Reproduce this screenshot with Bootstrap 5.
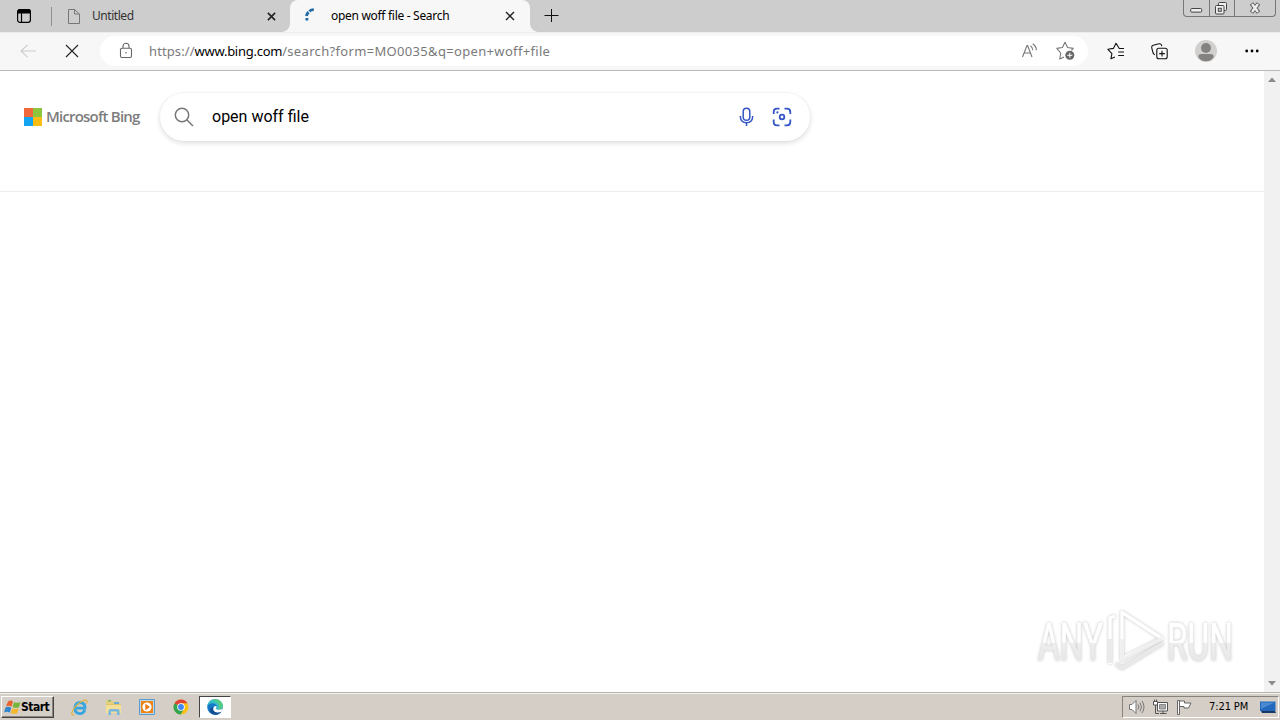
<!DOCTYPE html>
<html lang="en">
<head>
  <meta charset="UTF-8">
  <title>open woff file - Search</title>
  <link href="https://cdn.jsdelivr.net/npm/bootstrap@5.3.3/dist/css/bootstrap.min.css" rel="stylesheet">
  <style>
    body { width: 1280px; height: 720px; overflow: hidden; font-family: "Noto Sans", "Open Sans", sans-serif; color: #000; background: #fff; }
    svg { display: block; flex: none; overflow: visible; }
    span { white-space: nowrap; }

    /* tabs */
    .tab-strip { height: 32px; background: #cdcdcd; font-size: 12px; }
    .strip-menu { width: 51px; padding-left: 16px; }
    .strip-line { width: 1px; height: 19px; background: #8f8f8f; margin-top: 7px; }
    .tab-idle { width: 238px; padding: 0 14px 0 14px; color: #333; }
    .tab-live { width: 240px; padding: 0 15px 0 14px; background: #f7f7f7; border-radius: 8px 8px 0 0; position: relative; }
    .tab-live::before, .tab-live::after { content: ""; position: absolute; bottom: 0; width: 8px; height: 8px; }
    .tab-live::before { left: -8px; background: radial-gradient(circle at 0 0, #cdcdcd 7.5px, #f7f7f7 8px); }
    .tab-live::after { right: -8px; background: radial-gradient(circle at 100% 0, #cdcdcd 7.5px, #f7f7f7 8px); }
    .idle-title { letter-spacing: -.45px; }
    .live-title { letter-spacing: -.3px; margin-left: 13px; }
    .new-tab { padding-left: 14px; }
    .win-buttons { width: 93px; height: 17px; margin-right: 4px; border: 1px solid #777; border-top: 0; border-radius: 0 0 4px 4px; }
    .win-buttons > div + div { border-left: 1px solid #777; }

    /* toolbar */
    .tool-bar { height: 39px; padding-bottom: 1px; background: #f7f7f7; border-top: 1px solid #ececec; border-bottom: 1px solid #b9b9b9; }
    .address { width: 988px; height: 30px; margin-left: 22px; padding: 0 13px 0 18px; background: #fff; border-radius: 15px; font-size: 13px; color: #7a7a7a; }
    .address-text { letter-spacing: .33px; margin-left: 15px; padding-top: 2px; }
    .address-scheme { letter-spacing: .1px; }
    .address-host { letter-spacing: -.27px; color: #000; }

    /* search page */
    .page-view { height: 621px; }
    .search-head { height: 121px; padding: 22px 0 0 24px; border-bottom: 1px solid #ececec; }
    .logo-squares { display: grid; grid-template-columns: 9px 9px; grid-auto-rows: 9px; width: 18px; }
    .logo-text { font-family: "Open Sans", sans-serif; font-size: 15px; font-weight: 600; letter-spacing: -.8px; color: #7c7c7c; width: 114px; margin-left: 4px; padding-bottom: 2px; }
    .search-box { width: 650px; height: 48px; padding: 0 18px 0 14px; border-radius: 24px; background: #fff; box-shadow: 0 0 0 1px rgba(0,0,0,.02), 0 2px 4px 1px rgba(0,0,0,.1); }
    .query { font-family: Roboto, sans-serif; font-size: 16px; margin-left: 18px; }
    .scroll-track { width: 16px; background: #f1f1f1; padding: 6px 0 6px; }
    .watermark { position: absolute; left: 1036px; top: 609px; filter: drop-shadow(0 0 1.5px rgba(0,0,0,.25)); }

    /* taskbar */
    .task-bar { height: 28px; padding-top: 1px; background: #d5cec6; border-top: 1px solid #b6b3ae; box-shadow: inset 0 1px #f4f2ef; font-family: "DejaVu Sans", sans-serif; }
    .start-btn { width: 53px; height: 22px; margin-left: 1px; padding-left: 2px; border: 1px solid; border-color: #fff #444 #444 #fff; box-shadow: inset -1px -1px #8b8780; font: bold 12px "DejaVu Sans Condensed", "DejaVu Sans", sans-serif; letter-spacing: -.5px; }
    .task-live { width: 32px; height: 22px; background: #fff; border: 1px solid; border-color: #444 #fff #fff #444; }
    .tray { width: 157px; height: 22px; margin-right: 1px; border: 1px solid; border-color: #87827b #fff #fff #87827b; font-size: 11px; }
    .clock { letter-spacing: -.1px; width: 40px; margin-left: 16px; padding-top: 1px; font-family: "DejaVu Sans Condensed", sans-serif; }
  </style>
</head>
<body class="d-flex flex-column">

  <div class="tab-strip d-flex">
    <div class="strip-menu d-flex align-items-center">
      <svg width="16" height="16" viewBox="0 0 16 16" fill="none" stroke="#000" stroke-width="1.2"><rect x="1.6" y="1.6" width="12.8" height="12.8" rx="2.4"/><path d="M1.6 4V3.5Q2 1.6 4 1.6h8q2 0 2.4 2V5H1.6z" fill="#000"/><path d="M5.5 5v9.4"/></svg>
    </div>
    <div class="strip-line"></div>
    <div class="tab-idle d-flex align-items-center">
      <svg width="14" height="16" viewBox="0 0 14 16" fill="none" stroke="#777"><path d="M2.5 1.5h6L13.5 6v9.5h-11zM8.5 1.5V6h5"/></svg>
      <span class="idle-title ms-2 ps-1">Untitled</span>
      <svg class="ms-auto" width="9" height="9" viewBox="0 0 10 10" stroke="#222" stroke-width="1.8"><path d="M1 1l8 8M9 1L1 9"/></svg>
    </div>
    <div class="tab-live d-flex align-items-center">
      <svg width="14" height="16" viewBox="0 0 14 16" fill="none" stroke="#1f69a5" stroke-width="2.8"><path d="M2.9 12.5V10M2.4 8Q2.7 5.7 4.6 4.1M5.3 3.3Q7.2 1.7 9.8 1.7"/></svg>
      <span class="live-title">open woff file - Search</span>
      <svg class="ms-auto" width="10" height="10" viewBox="0 0 10 10" stroke="#222" stroke-width="1.4"><path d="M1 1l8 8M9 1L1 9"/></svg>
    </div>
    <div class="new-tab d-flex align-items-center">
      <svg width="14" height="14" viewBox="0 0 14 14" stroke="#111"><path d="M.5 6.5h14M7.5 0v13"/></svg>
    </div>
    <div class="win-buttons d-flex ms-auto">
      <div class="d-flex align-items-center justify-content-center" style="width:25px"><svg width="13" height="16" viewBox="0 0 13 16"><rect x=".7" y="8.5" width="11" height="3.6" rx="1" fill="#eee" stroke="#444"/></svg></div>
      <div class="d-flex align-items-center justify-content-center" style="width:25px"><svg width="14" height="16" viewBox="0 0 14 16" fill="#eee" stroke="#444"><rect x="3.5" y="2.5" width="8" height="8" rx="1"/><rect x=".5" y="5.5" width="8.5" height="8.5" rx="1"/><rect x="3.3" y="8.3" width="3" height="3" fill="#cdcdcd"/></svg></div>
      <div class="d-flex align-items-center justify-content-center flex-grow-1"><svg width="12" height="12" viewBox="0 0 12 12"><path d="M2.5 1.5l7 9M9.5 1.5l-7 9" stroke="#555" stroke-width="4.2"/><path d="M3 2.1l6 7.8M9 2.1L3 9.9" stroke="#eee" stroke-width="2.4"/></svg></div>
    </div>
  </div>

  <div class="tool-bar d-flex align-items-center">
    <svg style="margin-left:20px" width="16" height="14" viewBox="0 0 16 14" fill="none" stroke="#cbcbcb" stroke-width="1.1"><path d="M16 7H1M7.5 .8L1 7l6.5 6.2"/></svg>
    <svg style="margin-left:30px" width="12" height="12" viewBox="0 0 12 12" stroke="#222" stroke-width="1.1"><path d="M0 0l12 12M12 0L0 12"/></svg>
    <div class="address d-flex align-items-center">
      <svg width="16" height="18" viewBox="0 0 16 18" fill="none" stroke="#666" stroke-width="1.1"><rect x="2.5" y="6.2" width="11" height="9.3" rx="1.5"/><path d="M5 6V4.3a3 3 0 0 1 6 0V6"/><circle cx="8" cy="10.8" r=".8" fill="#666" stroke="none"/></svg>
      <span class="address-text"><span class="address-scheme">https://</span><span class="address-host">www.bing.com</span>/search?form=MO0035&amp;q=open+woff+file</span>
      <svg class="ms-auto" width="18" height="16" viewBox="0 0 18 16" fill="none" stroke="#777" stroke-width="1.1"><path d="M2.5 14L7 2.5h.6L12 14M4 10h6.6M10.5 2.7q2.2 1.6 2.3 4.6M12.7 .8q3.8 2.5 3.6 6.5"/></svg>
      <svg style="margin-left:18px" width="19" height="18" viewBox="0 0 19 18"><path d="M8 16l-4.2 2 .9-6L.8 7.4l5.6-.9L9 1.2l2.6 5.3 5.6.9-1.8 2" transform="translate(0 -1)" fill="none" stroke="#777" stroke-width="1.1" stroke-linejoin="round"/><circle cx="13.8" cy="13.3" r="4.5" fill="#666"/><path d="M13.8 10.8v5M11.3 13.3h5" stroke="#fff"/></svg>
    </div>
    <svg style="margin-left:19px" width="18" height="18" viewBox="0 0 18 18" fill="none" stroke="#111" stroke-width="1.1" stroke-linejoin="round"><path d="M17 6.5h-4.7L9 1.3 6.4 6.4.9 7.3l4 4.3-1 5.2 4-1.9M11.2 10H17M11.2 13.5H17"/></svg>
    <svg style="margin-left:26px" width="17" height="17" viewBox="0 0 17 17" fill="none" stroke="#111" stroke-width="1.1"><rect x="5.8" y="5.3" width="10.4" height="10.4" rx="2"/><path d="M11 7.8v5.6M8.2 10.6h5.6M3.8 11.7Q2.6 11.5 2 9.8L.7 4.7Q.4 2.8 2.2 2.3L8 .8q1.9-.4 2.5 1.3l.4 1"/></svg>
    <svg style="margin-left:27px" width="22" height="22" viewBox="0 0 22 22"><circle cx="11" cy="11" r="11" fill="#d2d0ce"/><circle cx="11" cy="8" r="5" fill="#848280"/><path d="M3.3 17q0-3 3-3h9.4q3 0 3 3-2.2 4.2-7.7 4.2T3.3 17" fill="#848280"/></svg>
    <svg style="margin-left:28px" width="14" height="4" viewBox="0 0 14 4"><circle cx="1.7" cy="2" r="1.4"/><circle cx="7" cy="2" r="1.4"/><circle cx="12.2" cy="2" r="1.4"/></svg>
  </div>

  <div class="page-view d-flex">
    <div class="flex-grow-1">
      <div class="search-head d-flex">
        <div class="d-flex align-items-center" style="height:48px">
          <div class="logo-squares"><i style="background:#f0683c"></i><i style="background:#8cc63f"></i><i style="background:#14a5f0"></i><i style="background:#fbbc14"></i></div>
          <span class="logo-text">Microsoft Bing</span>
        </div>
        <div class="search-box d-flex align-items-center">
          <svg width="20" height="20" viewBox="0 0 20 20" fill="none" stroke="#767676" stroke-width="1.5"><circle cx="8" cy="8" r="6.7"/><path d="M13 13l6 6"/></svg>
          <span class="query">open woff file</span>
          <svg class="ms-auto" width="14" height="20" viewBox="0 0 14 20" fill="none" stroke="#3455c5" stroke-width="1.5"><rect x="3.2" y="1.2" width="6.6" height="12" rx="3.3"/><path d="M.4 9v1.2q.4 5.3 6.1 5.5 5.7-.2 6.1-5.5V9M6.5 15.7V19"/></svg>
          <svg style="margin-left:18px" width="20" height="20" viewBox="0 0 20 20" fill="none" stroke="#3455c5" stroke-width="1.8"><path d="M12.5 1.7H15q3.3 0 3.3 3.3v2M18.3 12.5V15q0 3.3-3.3 3.3h-2.5M7.5 18.3H5q-3.3 0-3.3-3.3v-2.5M1.7 7V5Q1.7 1.7 5 1.7h2.5"/><circle cx="10" cy="10" r="2.3"/><circle cx="5.4" cy="5.4" r="1.1" fill="#3455c5" stroke="none"/></svg>
        </div>
      </div>
    </div>
    <div class="scroll-track d-flex flex-column align-items-center justify-content-between">
      <svg width="8" height="5" viewBox="0 0 8 5" fill="#8a8a8a"><path d="M0 5l4-4.5L8 5z"/></svg>
      <svg width="8" height="5" viewBox="0 0 8 5" fill="#8a8a8a"><path d="M0 0h8L4 4.5z"/></svg>
    </div>
  </div>

  <div class="task-bar d-flex align-items-center">
    <div class="start-btn d-flex align-items-center">
      <svg width="17" height="15" viewBox="0 0 17 15"><path d="M4 1.5q3-2 5 0L7.5 6.8Q4.7 4.8 2 6.5z" fill="#e8622c"/><path d="M10 2q3 1.7 6.5 0L15 7.2q-3.2 1.4-6.3-.2z" fill="#78b43a"/><path d="M1.5 7.6q3-1.7 5.7.2L5.8 12.8Q3.2 10.8 0 12.5z" fill="#3185cc"/><path d="M8.3 8.2q3.2 1.6 6.3.1L13.2 13.2q-3.3 1.4-6.3-.2z" fill="#f5b72b"/></svg>
      <span>Start</span>
    </div>
    <svg style="margin-left:17px" width="17" height="17" viewBox="0 0 17 17" fill="none"><path d="M13.8 11Q12.3 14.8 8.6 14.6 3.8 14 3.8 9.2T9 3.5Q14.3 3.9 14 9.1H5" stroke="#36a5e0" stroke-width="2.8"/><path d="M3.2 15.8Q-.5 16.8 1.5 12 5.3 4.5 13 1.3q4.2-1 2.5 3.2" stroke="#dfb344" stroke-width="1.3"/></svg>
    <svg style="margin-left:17px" width="17" height="17" viewBox="0 0 17 17"><path d="M1 2.5Q1 1 2.5 1H6l1 1.5h7V13H1z" fill="#e5cf7c"/><path d="M3 1h3v1.5H3z" fill="#75b963"/><path d="M9 3h5v2H9z" fill="#6aaed3"/><path d="M1 5h15v9H1z" fill="#f3df98"/><path d="M1 5h15v1H1z" fill="#dcc36e"/><path d="M3.5 16v-4q0-2 2-2h7q2 0 2 2v4H12v-3.5H6V16z" fill="#79b6db"/></svg>
    <svg style="margin-left:17px" width="16" height="16" viewBox="0 0 16 16"><path d="M.5.5h15v15H.5z" fill="#b9d9ee" stroke="#5b9bc9"/><path d="M2 2h12v12H2z" fill="#ef8419"/><circle cx="8" cy="8" r="4.6" fill="#fff"/><path d="M6.3 4.8L11 8l-4.7 3.2z" fill="#ed7815"/></svg>
    <svg style="margin-left:18px" width="16" height="16" viewBox="0 0 16 16"><circle cx="8" cy="8" r="7.5" fill="#fbc116"/><path d="M8 8L1.5 4.2A7.5 7.5 0 0 1 14.5 4.3H8z" fill="#df4335"/><path d="M1.5 4.2A7.5 7.5 0 0 0 7.7 15.5L11 10 8 8z" fill="#31a351"/><circle cx="8" cy="8" r="3.8" fill="#fff"/><circle cx="8" cy="8" r="2.9" fill="#4285f4"/></svg>
    <div class="task-live d-flex align-items-center justify-content-center" style="margin-left:10px">
      <svg width="16" height="16" viewBox="0 0 16 16"><circle cx="8" cy="8" r="7.8" fill="#1479c8"/><path d="M.3 7.3C1 2.7 4.2.2 8 .2c5 0 8 3.5 7.8 6.9-.2 2.6-2 3.7-4.2 3.7-1.5 0-2.4-.5-2.4-1 0-.3.8-.8.8-2C10 5.4 7.7 4 5 4.2 2.8 4.4 1 5.5.3 7.3z" fill="#38bfc5"/><path d="M8 .2c5 0 8 3.5 7.8 6.9-.2 2.6-2 3.7-4.2 3.7 2-3.8-.5-8.6-6.6-9.9Q6.5.2 8 .2z" fill="#54ca82"/><path d="M5.8 8.2q-.4 5 5 5.3 2 .1 3.6-.8Q12.2 16 8 15.8 2.5 15 2.8 10.5q.5-1.7 3-2.3z" fill="#154f91"/><path d="M7.2 7.5q1.4-1.3 2.5.2 0 .8-.7 1.7.3 1.3 2.5 1.4 2.5.1 4-1.3-.3 1.8-1.1 3.2-5.6 2-7.9-1.3-.9-2 .7-3.9z" fill="#fff"/></svg>
    </div>
    <div class="tray d-flex align-items-center ms-auto">
      <svg style="margin-left:5px" width="18" height="16" viewBox="0 0 18 16" fill="none" stroke="#777"><path d="M1.5 5.5H4l4-4v13l-4-4H1.5z" fill="#fff"/><path d="M10 5.5q1.7 2.5 0 5M12 3.7q3 4.3 0 8.6M14 2q4 6 0 12"/></svg>
      <svg style="margin-left:6px" width="16" height="16" viewBox="0 0 16 16" fill="#fff" stroke="#555"><path d="M5.5 3.5h10V12h-10z"/><path d="M7.5 5.5h6V10h-6z" fill="#aaa" stroke="#888"/><path d="M8 14.5h6.5M11 12v2"/><path d="M3.5 6v8.5H7" fill="none"/><path d="M1.5 2.5h4V6h-4zM2.5 .5v2M4.5 .5v2"/></svg>
      <svg style="margin-left:8px" width="17" height="16" viewBox="0 0 17 16" fill="#fff" stroke="#666"><path d="M1.5 1.5h2v14h-2zM3.5 2h5v2H15l-2.5 5H8V7.5H3.5z"/></svg>
      <span class="clock">7:21 PM</span>
      <svg style="margin-left:11px" width="16" height="14" viewBox="0 0 16 14"><path d="M0 1.5h15.5V11H0z" fill="#2368bd"/><path d="M1 2.5h13.5L1 9z" fill="#4b8ad3"/><path d="M1 11h14l1 2H2z" fill="#173862"/></svg>
    </div>
  </div>

  <!-- recording watermark above the page -->
  <svg class="watermark" width="202" height="68" viewBox="0 0 202 68" fill="none">
    <defs>
      <linearGradient id="fade" gradientUnits="userSpaceOnUse" x1="0" y1="14" x2="0" y2="56"><stop offset=".46" stop-color="#fff"/><stop offset=".48" stop-color="#eee"/><stop offset="1" stop-color="#e6e6e6"/></linearGradient>
    </defs>
    <g fill="url(#fade)" stroke="url(#fade)" stroke-width=".7" font-family="Roboto, sans-serif" font-size="51">
      <text x="2" y="51" textLength="65" lengthAdjust="spacingAndGlyphs">ANY</text>
      <text x="131" y="51" textLength="66" lengthAdjust="spacingAndGlyphs">RUN</text>
    </g>
    <g stroke-width="3.5" stroke-linejoin="round">
      <path d="M79 7l-5 2v46" stroke="#fff"/>
      <path d="M74 30v24M80 55l6 4 41-25" stroke="#e9e9e9"/>
      <path d="M86 3.5v46l40-20z" stroke="#fff"/>
      <path d="M86 30v21l40-22" stroke="#efefef"/>
    </g>
  </svg>

  <script src="https://cdn.jsdelivr.net/npm/bootstrap@5.3.3/dist/js/bootstrap.bundle.min.js"></script>
</body>
</html>
